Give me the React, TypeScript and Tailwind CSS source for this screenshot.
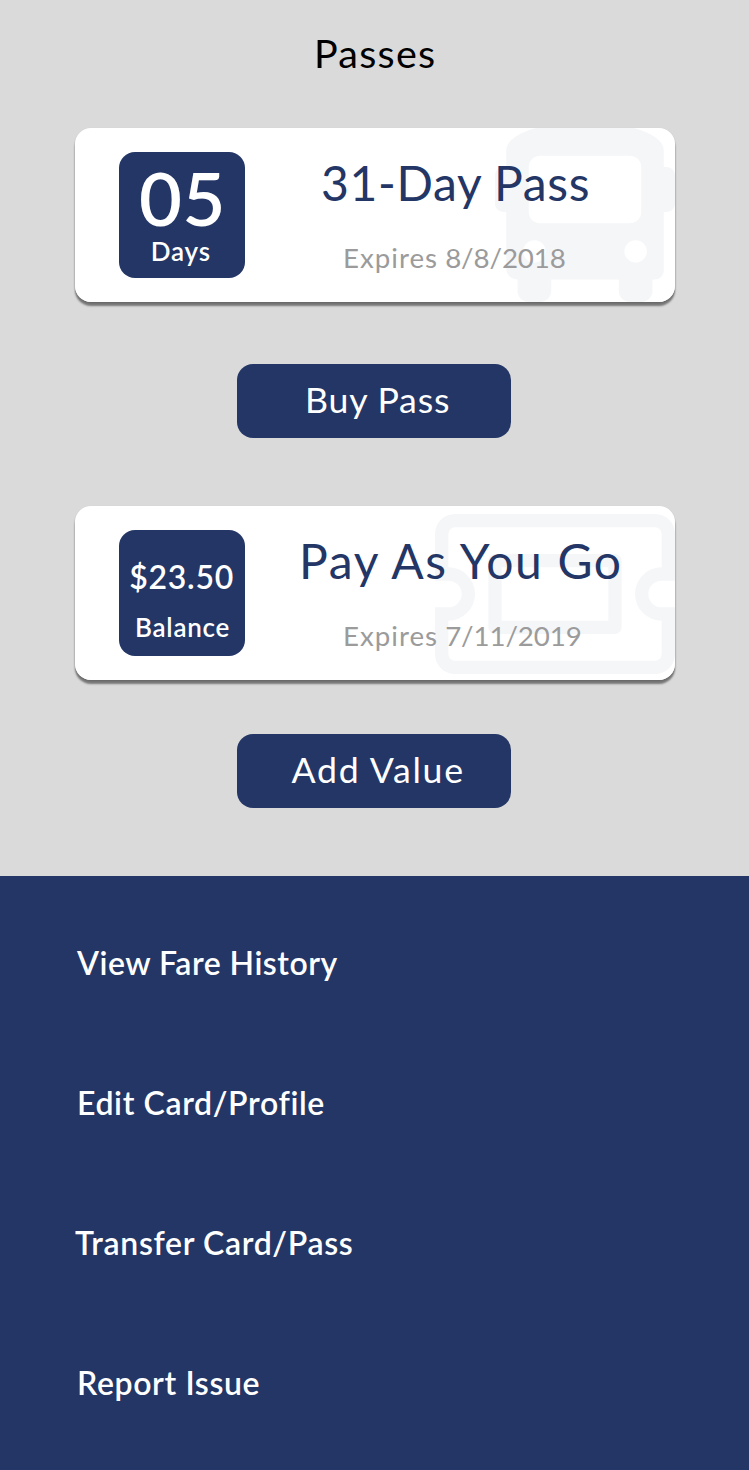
import type { ReactNode } from "react";

function BusArt() {
  return (
    <svg viewBox="0 0 512 512" className="absolute -top-[6px] left-[420px] size-[180px] fill-[#f5f6f8]">
      <path
        fillRule="evenodd"
        d="M488 128h-8V80C480 35.2 380.8 0 256 0S32 35.2 32 80v48h-8c-13.3 0-24 10.7-24 24v80c0 13.3 10.7 24 24 24h8v160c0 17.7 14.3 32 32 32v32c0 17.7 14.3 32 32 32h32c17.7 0 32-14.3 32-32v-32h192v32c0 17.7 14.3 32 32 32h32c17.7 0 32-14.3 32-32v-32h6.4c16 0 25.6-12.8 25.6-25.6V256h8c13.3 0 24-10.7 24-24v-80c0-13.3-10.7-24-24-24zM112 400a32 32 0 1 1 0-64 32 32 0 0 1 0 64zm16-112c-17.7 0-32-14.3-32-32V128c0-17.7 14.3-32 32-32h256c17.7 0 32 14.3 32 32v128c0 17.7-14.3 32-32 32H128zm272 112a32 32 0 1 1 0-64 32 32 0 0 1 0 64z"
      />
    </svg>
  );
}

function TicketArt() {
  return (
    <svg viewBox="0 0 360 240" className="absolute top-[8px] left-[360px] h-[160px] w-[240px] fill-[#f5f6f8]">
      <path
        fillRule="evenodd"
        d="M30 0H330a30 30 0 0 1 30 30V100H340a20 20 0 0 0 0 40H360V210a30 30 0 0 1-30 30H30a30 30 0 0 1-30-30V140H20a20 20 0 0 0 0-40H0V30A30 30 0 0 1 30 0zM30 20a10 10 0 0 0-10 10V80a40 40 0 1 1 0 80V210a10 10 0 0 0 10 10H330a10 10 0 0 0 10-10V160a40 40 0 1 1 0-80V30a10 10 0 0 0-10-10zM90 60H270a10 10 0 0 1 10 10V170a10 10 0 0 1-10 10H90a10 10 0 0 1-10-10V70a10 10 0 0 1 10-10zM100 80V160H260V80z"
      />
    </svg>
  );
}

function Card({ art, badge, children }: { art: ReactNode; badge: ReactNode; children: ReactNode }) {
  return (
    <article className="rounded-[16px] shadow-[0_4px_2px_rgba(0,0,0,0.45),0_1px_2px_rgba(0,0,0,0.15)]">
      <div className="relative flex h-[174px] overflow-hidden rounded-[16px] bg-white pt-6 pl-11">
        {art}
        <div className="relative flex size-[126px] shrink-0 flex-col rounded-[16px] bg-[#233666] font-semibold text-white">
          {badge}
        </div>
        <div className="relative flex flex-col items-start">{children}</div>
      </div>
    </article>
  );
}

function Expiry({ date }: { date: string }) {
  return (
    <p className="pt-[29px] pl-[98px] text-[27.7px] leading-[34px] tracking-[-0.1px] text-[#9b9b9b]">
      <span className="tracking-[1px] [word-spacing:-1px]">Expires </span>
      {date}
    </p>
  );
}

function ActionButton({ children }: { children: ReactNode }) {
  return (
    <button className="flex h-[74px] w-[274px] rounded-[16px] bg-[#233666] pt-[14px] text-[35.7px] leading-[44px] text-white">
      {children}
    </button>
  );
}

export default function App() {
  return (
    <div className="flex h-[1470px] w-[749px] flex-col overflow-hidden bg-[#dadada] font-['Lato',sans-serif] whitespace-nowrap">
      <main className="h-[876px] shrink-0 pt-[29px] pl-[75px]">
        <h1 className="h-[99px] pl-[239px] text-[39.5px] leading-[48px] tracking-[1.25px] text-black">Passes</h1>

        <div className="w-[600px]">
          <Card
            art={<BusArt />}
            badge={
              <>
                <span className="pt-[10px] pl-[20px] text-[74px] leading-[72px] tracking-[0.5px]">05</span>
                <span className="pt-[1px] pl-[31.7px] text-[26px] leading-[32px] tracking-[0.84px]">Days</span>
              </>
            }
          >
            <h2 className="pt-[2px] pl-[76px] text-[48px] leading-[58px] tracking-[0.65px] text-[#233666]">
              31-Day Pass
            </h2>
            <Expiry date="8/8/2018" />
          </Card>
        </div>

        <div className="pt-[62px] pl-[162px]">
          <ActionButton>
            <span className="pl-[68px] tracking-[0.8px]">Buy Pass</span>
          </ActionButton>
        </div>

        <div className="w-[600px] pt-[68px]">
          <Card
            art={<TicketArt />}
            badge={
              <>
                <span className="pt-[28px] pl-[10.2px] text-[32px] leading-[38px] tracking-[0.75px]">$23.50</span>
                <span className="pt-[15px] pl-[16px] text-[26px] leading-[32px] tracking-[0.75px]">Balance</span>
              </>
            }
          >
            <h2 className="pt-[2px] pl-[54px] text-[48px] leading-[58px] tracking-[1.65px] text-[#233666]">
              Pay As You Go
            </h2>
            <Expiry date="7/11/2019" />
          </Card>
        </div>

        <div className="pt-[54px] pl-[162px]">
          <ActionButton>
            <span className="pl-[54.5px] tracking-[1.69px]">Add Value</span>
          </ActionButton>
        </div>
      </main>

      <nav className="flex flex-1 flex-col gap-[100px] bg-[#233666] pt-[67px] pl-[75px] text-[32px] leading-[40px] font-semibold text-white">
        <a className="pl-[2px] tracking-[0.5px]">View Fare History</a>
        <a className="pl-[2px] tracking-[0.63px]">Edit Card/Profile</a>
        <a className="tracking-[0.65px]">Transfer Card/Pass</a>
        <a className="pl-[2px] tracking-[0.62px]">Report Issue</a>
      </nav>
    </div>
  );
}
